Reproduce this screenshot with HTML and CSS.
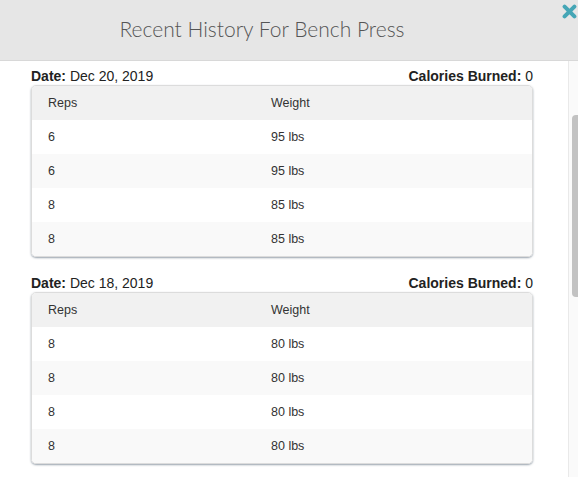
FILE: index.html
```html
<!DOCTYPE html>
<html>
<head>
<meta charset="utf-8">
<link rel="stylesheet" href="styles.css">
</head>
<body>
<div class="modal">
  <header class="modal-header">
    <h1 class="modal-title">Recent History For Bench Press</h1>
    <button class="close" aria-label="Close">
      <svg width="15" height="15" viewBox="0 0 15 15"><path d="M2.6 2.6 L12.4 12.4 M12.4 2.6 L2.6 12.4" stroke="#45a6b6" stroke-width="4" stroke-linecap="round"/></svg>
    </button>
  </header>
  <div class="modal-body">
    <div class="content">
      <section class="session">
        <div class="session-meta">
          <span><b>Date:</b> Dec 20, 2019</span>
          <span><b>Calories Burned:</b> 0</span>
        </div>
        <div class="card">
          <table class="sets">
            <thead><tr><th>Reps</th><th>Weight</th></tr></thead>
            <tbody>
              <tr><td>6</td><td>95 lbs</td></tr>
              <tr><td>6</td><td>95 lbs</td></tr>
              <tr><td>8</td><td>85 lbs</td></tr>
              <tr><td>8</td><td>85 lbs</td></tr>
            </tbody>
          </table>
        </div>
      </section>
      <section class="session">
        <div class="session-meta">
          <span><b>Date:</b> Dec 18, 2019</span>
          <span><b>Calories Burned:</b> 0</span>
        </div>
        <div class="card">
          <table class="sets">
            <thead><tr><th>Reps</th><th>Weight</th></tr></thead>
            <tbody>
              <tr><td>8</td><td>80 lbs</td></tr>
              <tr><td>8</td><td>80 lbs</td></tr>
              <tr><td>8</td><td>80 lbs</td></tr>
              <tr><td>8</td><td>80 lbs</td></tr>
            </tbody>
          </table>
        </div>
      </section>
    </div>
    <div class="scrollbar"><div class="thumb"></div></div>
  </div>
</div>
</body>
</html>
```
FILE: styles.css
```css
html, body {
  margin: 0;
  padding: 0;
  background: #ffffff;
  height: 100%;
  overflow: hidden;
}
body {
  font-family: "Liberation Sans", Arial, sans-serif;
  color: #333333;
}
.modal {
  display: flex;
  flex-direction: column;
  height: 477px;
}
.modal-header {
  position: relative;
  height: 60px;
  background: #e6e6e6;
  border-bottom: 1px solid #d8d8d8;
  display: flex;
  align-items: center;
  justify-content: center;
  padding-right: 54px;
  flex: none;
}
.modal-title {
  margin: 0;
  font-family: Lato, "Liberation Sans", sans-serif;
  font-weight: 300;
  font-size: 21px;
  color: #555555;
  line-height: 24px;
  padding-bottom: 2px;
}
.close {
  position: absolute;
  top: 4px;
  right: 1px;
  width: 15px;
  height: 15px;
  padding: 0;
  border: 0;
  background: none;
  display: block;
}
.close svg { display: block; }
.modal-body {
  flex: 1;
  display: flex;
  min-height: 0;
}
.content {
  flex: 1;
  padding: 7px 35px 0 31px;
}
.session {
  margin-bottom: 18px;
}
.session-meta {
  display: flex;
  justify-content: space-between;
  font-size: 14px;
  line-height: 17px;
  color: #222;
}
.session-meta b { font-weight: bold; }
.card {
  border: 1px solid #dcdcdc;
  border-radius: 5px;
  overflow: hidden;
  box-shadow: 0 1px 2px rgba(50, 70, 90, 0.5);
}
.sets {
  width: 100%;
  border-collapse: collapse;
  font-size: 12.5px;
}
.sets th, .sets td {
  height: 34px;
  padding: 0 16px;
  text-align: left;
  font-weight: normal;
  vertical-align: middle;
  box-sizing: border-box;
}
.sets th:first-child, .sets td:first-child {
  width: 223px;
}
.sets thead tr { background: #f1f1f1; }
.sets tbody tr:nth-child(odd) { background: #ffffff; }
.sets tbody tr:nth-child(even) { background: #f9f9f9; }
.scrollbar {
  box-sizing: border-box;
  width: 10px;
  flex: none;
  background: #fafafa;
  border-left: 1px solid #e9e9e9;
  padding-top: 54px;
  padding-left: 3px;
}
.thumb {
  height: 182px;
  background: #c2c2c2;
  border-radius: 4px 0 0 4px;
}
```
